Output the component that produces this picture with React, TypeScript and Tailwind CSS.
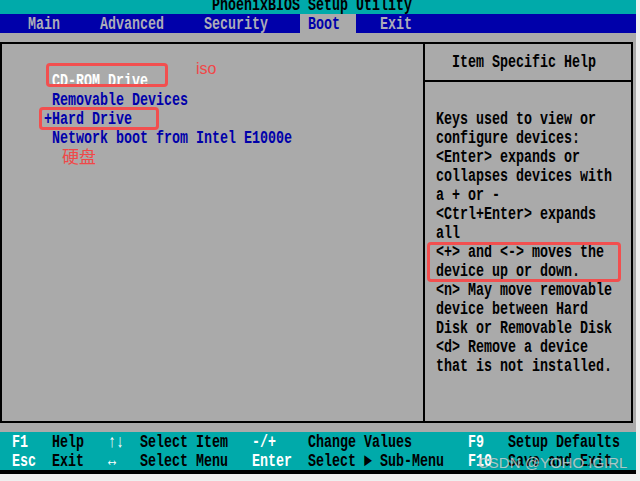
import React from "react";

const T = ({ children, className = "" }: { children: React.ReactNode; className?: string }) => (
  <span className={`inline-block h-[19px] leading-[19px] whitespace-pre scale-y-[1.38] translate-y-px ${className}`}>{children}</span>
);

const Row = ({ children, className = "" }: { children?: React.ReactNode; className?: string }) => (
  <div className={`flex h-[19px] ${className}`}>{children ?? <T> </T>}</div>
);

const help = [
  "Keys used to view or",
  "configure devices:",
  "<Enter> expands or",
  "collapses devices with",
  "a + or -",
  "<Ctrl+Enter> expands",
  "all",
  "<+> and <-> moves the",
  "device up or down.",
  "<n> May move removable",
  "device between Hard",
  "Disk or Removable Disk",
  "<d> Remove a device",
  "that is not installed.",
];

export default function App() {
  const W = "text-white";
  const K = "text-black";
  return (
    <div className="relative w-[640px] h-[481px] overflow-hidden bg-[#efefef] font-['Liberation_Mono',monospace] font-bold text-[13.333px]">
      <div className="flex w-[636px] flex-col">
        {/* title */}
        <div className="h-[14px] overflow-hidden bg-[#00aaaa] text-black">
          <div className="-mt-[5px] pl-[4px]">
            <Row>
              <T>{"                          PhoenixBIOS Setup Utility"}</T>
            </Row>
          </div>
        </div>
        {/* menu */}
        <div className="flex h-[19px] bg-[#0000aa] pl-[4px] text-[#acacb8]">
          <T>{"   Main     Advanced     Security    "}</T>
          <div className="bg-[#aaaaaa] text-[#0000aa]">
            <T>{" Boot  "}</T>
          </div>
          <T>{"   Exit"}</T>
        </div>
        {/* body */}
        <div className="h-[399px] bg-[#aaaaaa] pt-[9px]">
          <div className="flex h-[381px] w-[633px] border-2 border-black">
            <div className="flex-1 pl-[2px] pt-[8px] text-[#0000aa]">
              <Row />
              <Row>
                <T className="text-white">{"      CD-ROM Drive"}</T>
              </Row>
              <Row>
                <T>{"      Removable Devices"}</T>
              </Row>
              <Row>
                <T>{"     +Hard Drive"}</T>
              </Row>
              <Row>
                <T>{"      Network boot from Intel E1000e"}</T>
              </Row>
            </div>
            <div className="flex w-[208px] flex-col border-l-2 border-black text-black">
              <div className="h-[38px] border-b-2 border-black pl-[11px] pt-[8px]">
                <Row>
                  <T>{"  Item Specific Help"}</T>
                </Row>
              </div>
              <div className="pl-[11px] pt-[27px]">
                {help.map((l, i) => (
                  <Row key={i}>
                    <T>{l}</T>
                  </Row>
                ))}
              </div>
            </div>
          </div>
        </div>
        {/* footer */}
        <div className="h-[38px] bg-[#00aaaa] pl-[4px]">
          <Row>
            <T className={W}>{" F1"}</T>
            <T className={K}>{"   Help   "}</T>
            <T className={W}>{"↑↓"}</T>
            <T className={K}>{"  Select Item   "}</T>
            <T className={W}>{"-/+"}</T>
            <T className={K}>{"    Change Values       "}</T>
            <T className={W}>{"F9"}</T>
            <T className={K}>{"   Setup Defaults"}</T>
          </Row>
          <Row>
            <T className={W}>{" Esc"}</T>
            <T className={K}>{"  Exit   "}</T>
            <T className={W}>{"↔"}</T>
            <T className={K}>{"   Select Menu   "}</T>
            <T className={W}>{"Enter"}</T>
            <T className={K}>{"  Select ► Sub-Menu   "}</T>
            <T className={W}>{"F10"}</T>
            <T className={K}>{"  Save and Exit"}</T>
          </Row>
        </div>
        <div className="h-[4px] bg-black" />
      </div>

      {/* annotations */}
      <div className="absolute left-[46px] top-[63px] h-[24px] w-[122px] rounded-[4px] border-[3px] border-[#f24f4f]" />
      <div className="absolute left-[39px] top-[107px] h-[23px] w-[120px] rounded-[4px] border-[3px] border-[#f24f4f]" />
      <div className="absolute left-[427px] top-[242px] h-[40px] w-[194px] rounded-[4px] border-[3px] border-[#f24f4f]" />
      <div className="absolute left-[196px] top-[57px] font-['Liberation_Sans',sans-serif] text-[16px] font-normal text-[#f04848]">
        iso
      </div>
      <div className="absolute left-[62px] top-[143px] font-['Noto_Sans_CJK_SC',sans-serif] text-[17px] font-normal text-[#f04848]">
        硬盘
      </div>
      <div className="absolute left-[478px] top-[452px] font-['Liberation_Sans',sans-serif] text-[15px] font-normal text-white/60 [text-shadow:0_0_1px_rgba(80,80,80,0.6)]">
        CSDN @YOHO IGIRL
      </div>
    </div>
  );
}
